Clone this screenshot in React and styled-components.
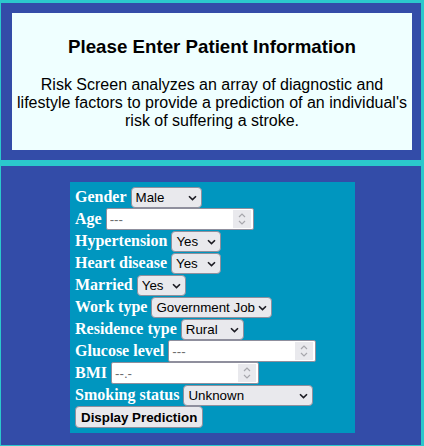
import React from 'react';
import styled, { createGlobalStyle } from 'styled-components';

const GlobalStyle = createGlobalStyle`
    html, body {
        margin: 0;
        background: #2bc8cc;
    }
    body {
        font-family: "Liberation Serif", "Times New Roman", serif;
    }
`

const Chevron = () => (
    <svg width="9" height="6" viewBox="0 0 9 6">
        <path d="M1 1.2 L4.5 4.6 L8 1.2" fill="none" stroke="#1c1b22" strokeWidth="1.6" />
    </svg>
)

const Spin = () => (
    <svg width="10" height="16" viewBox="0 0 10 16">
        <path d="M2 6 L5 3 L8 6" fill="none" stroke="#a7a7ad" strokeWidth="1.2" />
        <path d="M2 10 L5 13 L8 10" fill="none" stroke="#a7a7ad" strokeWidth="1.2" />
    </svg>
)

const Choice = ({width, value, options}) => (
    <SelectWrap width={width}>
        <Select defaultValue={value}>
            {options.map(o => <option key={o}>{o}</option>)}
        </Select>
        <Arrow><Chevron /></Arrow>
    </SelectWrap>
)

const NumberField = ({placeholder}) => (
    <NumberWrap>
        <NumberInput type="number" placeholder={placeholder} />
        <Spinner><Spin /></Spinner>
    </NumberWrap>
)

const App = () => {
    const yesNo = ['Yes', 'No']
    return (
        <>
            <GlobalStyle />
            <Page>
                <Header>
                    <Intro>
                        <Title>Please Enter Patient Information</Title>
                        <Text>
                            Risk Screen analyzes an array of diagnostic and lifestyle factors to provide a
                            prediction of an individual's risk of suffering a stroke.
                        </Text>
                    </Intro>
                </Header>
                <FormSection>
                    <Panel>
                        <Row>
                            <Label>Gender</Label>
                            <Choice width={71} value="Male" options={['Male', 'Female', 'Other']} />
                        </Row>
                        <Row>
                            <Label>Age</Label>
                            <NumberField placeholder="---" />
                        </Row>
                        <Row>
                            <Label>Hypertension</Label>
                            <Choice width={50} value="Yes" options={yesNo} />
                        </Row>
                        <Row>
                            <Label>Heart disease</Label>
                            <Choice width={50} value="Yes" options={yesNo} />
                        </Row>
                        <Row>
                            <Label>Married</Label>
                            <Choice width={49} value="Yes" options={yesNo} />
                        </Row>
                        <Row>
                            <Label>Work type</Label>
                            <Choice width={121} value="Government Job" options={['Government Job', 'Private', 'Self-employed', 'Never worked', 'Children']} />
                        </Row>
                        <Row>
                            <Label>Residence type</Label>
                            <Choice width={63} value="Rural" options={['Rural', 'Urban']} />
                        </Row>
                        <Row>
                            <Label>Glucose level</Label>
                            <NumberField placeholder="---" />
                        </Row>
                        <Row>
                            <Label>BMI</Label>
                            <NumberField placeholder="--.-" />
                        </Row>
                        <Row>
                            <Label>Smoking status</Label>
                            <Choice width={130} value="Unknown" options={['Unknown', 'Never smoked', 'Formerly smoked', 'Smokes']} />
                        </Row>
                        <Row>
                            <Button>Display Prediction</Button>
                        </Row>
                    </Panel>
                </FormSection>
            </Page>
        </>
    )
}

export default App;

const Page = styled.div`
    display: flex;
    flex-direction: column;
    gap: 6px;
    padding: 3px 3px 0 1px;
`

const Header = styled.div`
    background: #334ca8;
    padding: 10px 9px 10px 11px;
`

const Intro = styled.div`
    background: #efffff;
    padding: 4px 5px 4px;
    text-align: center;
    font-family: "Liberation Sans", Arial, sans-serif;
    color: #000;
`

const Title = styled.h3`
    font-size: 18.72px;
    font-weight: bold;
    margin: 18.72px 0;
`

const Text = styled.p`
    font-size: 16px;
    margin: 16px 0;
`

const FormSection = styled.div`
    background: #334ca8;
    padding: 16px 0 0 69px;
    min-height: 263px;
`

const Panel = styled.div`
    width: 285px;
    box-sizing: border-box;
    background: #0096bf;
    padding: 4px 5px 5px;
`

const Row = styled.div`
    display: flex;
    align-items: center;
    gap: 4px;
    height: 22px;
`

const Label = styled.span`
    font-family: "Liberation Serif", "Times New Roman", serif;
    font-weight: bold;
    font-size: 16px;
    color: #fff;
`

const SelectWrap = styled.div`
    position: relative;
    width: ${({width}) => width}px;
    height: 21px;
`

const Select = styled.select`
    appearance: none;
    width: 100%;
    height: 100%;
    box-sizing: border-box;
    background: #e9e9ed;
    border: 1px solid #8f8f9d;
    border-radius: 4px;
    padding: 0 12px 0 4px;
    font-family: "Liberation Sans", Arial, sans-serif;
    font-size: 13.33px;
    color: #000;
    outline: none;
`

const Arrow = styled.span`
    position: absolute;
    right: 5px;
    top: 8px;
    display: flex;
    pointer-events: none;
`

const NumberWrap = styled.div`
    display: flex;
    align-items: center;
    width: 148px;
    height: 22px;
    box-sizing: border-box;
    background: #fff;
    border: 1px solid #8f8f9d;
    border-radius: 2px;
    padding: 1px 2px 1px 0;
`

const NumberInput = styled.input`
    flex: 1;
    min-width: 0;
    border: none;
    outline: none;
    background: transparent;
    padding: 0 3px;
    font-family: "Liberation Sans", Arial, sans-serif;
    font-size: 13.33px;
    -moz-appearance: textfield;
    &::-webkit-inner-spin-button,
    &::-webkit-outer-spin-button {
        -webkit-appearance: none;
        margin: 0;
    }
    &::placeholder {
        color: #6d6d6d;
    }
`

const Spinner = styled.span`
    display: flex;
    align-items: center;
    justify-content: center;
    width: 18px;
    height: 18px;
    background: #e9e9ed;
`

const Button = styled.button`
    height: 22px;
    background: #e9e9ed;
    border: 1px solid #8f8f9d;
    border-radius: 4px;
    padding: 0 5px;
    font-family: "Liberation Sans", Arial, sans-serif;
    font-size: 13.33px;
    font-weight: bold;
    color: #000;
`
